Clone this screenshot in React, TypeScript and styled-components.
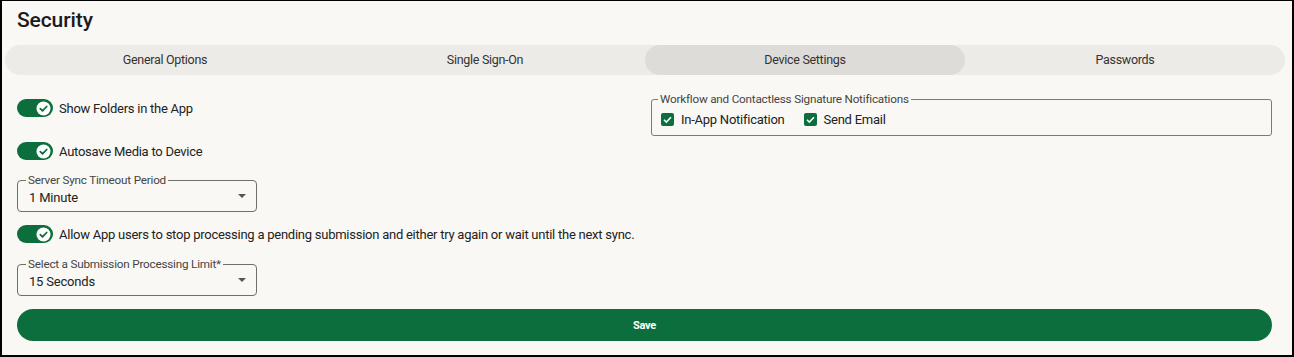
import React, { useState } from 'react';
import styled, { createGlobalStyle } from 'styled-components';

const GlobalStyle = createGlobalStyle`
  html, body {
    margin: 0;
    padding: 0;
    background: #ffffff;
  }
  * {
    box-sizing: border-box;
  }
`;

const PAGE_BG = '#f9f8f5';
const GREEN = '#0c6e3c';

// moldura da página
const Frame = styled.div`
  width: 1294px;
  height: 357px;
  border: 2px solid #000;
  border-top-width: 1px;
  background: ${PAGE_BG};
  font-family: Roboto, 'Liberation Sans', sans-serif;
  color: #222;
  overflow: hidden;
`;

const Title = styled.h1`
  margin: 0;
  padding: 7px 0 0 15px;
  height: 44px;
  font-size: 21px;
  font-weight: 500;
  color: #1b1b1b;
  letter-spacing: -0.1px;
`;

const TabBar = styled.div`
  display: grid;
  grid-template-columns: repeat(4, 1fr);
  height: 30px;
  margin-left: 3px;
  width: 1280px;
  background: #edebe7;
  border-radius: 15px;
`;

const Tab = styled.button<{ active?: boolean }>`
  border: none;
  border-radius: 15px;
  background: ${({ active }) => (active ? '#dedcd8' : 'transparent')};
  font-family: Roboto, 'Liberation Sans', sans-serif;
  font-size: 12.5px;
  letter-spacing: -0.3px;
  color: #333;
  cursor: pointer;
  padding: 0 0 2px 0;
`;

const Content = styled.div`
  display: grid;
  grid-template-columns: 621px 621px;
  column-gap: 13px;
  padding: 21px 0 0 15px;
`;

const Column = styled.div`
  display: flex;
  flex-direction: column;
`;

const ToggleRow = styled.label<{ mt: number }>`
  display: flex;
  align-items: center;
  gap: 6px;
  height: 24px;
  margin-top: ${({ mt }) => mt}px;
  font-size: 13px;
  letter-spacing: -0.25px;
  color: #222;
  cursor: pointer;
`;

const Track = styled.span`
  display: inline-flex;
  align-items: center;
  justify-content: flex-end;
  width: 36px;
  height: 18px;
  padding: 0 2px;
  border-radius: 9px;
  background: ${GREEN};
`;

const SelectBox = styled.div<{ mt: number }>`
  position: relative;
  width: 240px;
  height: 32px;
  margin-top: ${({ mt }) => mt}px;
  padding: 2px 10px 0 11px;
  border: 1px solid #6f6f6f;
  border-radius: 4px;
  display: flex;
  align-items: center;
  justify-content: space-between;
`;

// rótulo sobre a borda do campo
const Legend = styled.span<{ left: number }>`
  position: absolute;
  top: -7px;
  left: ${({ left }) => left}px;
  padding: 0 2px;
  background: ${PAGE_BG};
  font-size: 11.7px;
  letter-spacing: -0.2px;
  color: #444;
  line-height: 12px;
  white-space: nowrap;
`;

const SelectValue = styled.span`
  font-size: 13px;
  letter-spacing: -0.2px;
  color: #222;
`;

const Arrow = styled.span`
  width: 0;
  height: 0;
  margin-top: -2px;
  border-left: 4px solid transparent;
  border-right: 4px solid transparent;
  border-top: 4px solid #555;
`;

const NotifyBox = styled.div`
  position: relative;
  margin-top: 3px;
  height: 37px;
  padding: 3px 9px 0 9px;
  border: 1px solid #7a7a7a;
  border-radius: 3px;
  display: flex;
  align-items: center;
  gap: 19px;
`;

const CheckItem = styled.label`
  display: flex;
  align-items: center;
  gap: 7px;
  font-size: 13px;
  letter-spacing: -0.25px;
  color: #222;
  cursor: pointer;
`;

const CheckSquare = styled.span`
  display: inline-flex;
  align-items: center;
  justify-content: center;
  width: 13px;
  height: 13px;
  border-radius: 2px;
  background: ${GREEN};
`;

const SaveButton = styled.button`
  display: block;
  margin: 13px 0 0 15px;
  width: 1255px;
  height: 32px;
  border: none;
  border-radius: 16px;
  background: ${GREEN};
  color: #fff;
  font-family: Roboto, 'Liberation Sans', sans-serif;
  font-size: 11px;
  font-weight: 700;
  letter-spacing: -0.3px;
  cursor: pointer;
`;

const Knob = () => (
  <svg width="15" height="15" viewBox="0 0 15 15">
    <circle cx="7.5" cy="7.5" r="7" fill="#fff" />
    <path d="M4.3 7.7l2.2 2.2 4.2-4.4" fill="none" stroke={GREEN} strokeWidth="1.8" strokeLinecap="round" strokeLinejoin="round" />
  </svg>
);

const Tick = () => (
  <svg width="11" height="11" viewBox="0 0 11 11">
    <path d="M2 5.8l2.3 2.3L9 3.2" fill="none" stroke="#fff" strokeWidth="1.5" />
  </svg>
);

const Toggle: React.FC<{ label: string; mt: number }> = ({ label, mt }) => (
  <ToggleRow mt={mt}>
    <Track>
      <Knob />
    </Track>
    {label}
  </ToggleRow>
);

const Select: React.FC<{ legend: string; value: string; mt: number }> = ({ legend, value, mt }) => (
  <SelectBox mt={mt}>
    <Legend left={8}>{legend}</Legend>
    <SelectValue>{value}</SelectValue>
    <Arrow />
  </SelectBox>
);

const tabs = ['General Options', 'Single Sign-On', 'Device Settings', 'Passwords'];

export default function App() {
  const [active, setActive] = useState(2);
  return (
    <>
      <GlobalStyle />
      <Frame>
        <Title>Security</Title>
        <TabBar>
          {tabs.map((t, i) => (
            <Tab key={t} active={i === active} onClick={() => setActive(i)}>
              {t}
            </Tab>
          ))}
        </TabBar>
        <Content>
          <Column>
            <Toggle label="Show Folders in the App" mt={0} />
            <Toggle label="Autosave Media to Device" mt={19} />
            <Select legend="Server Sync Timeout Period" value="1 Minute" mt={17} />
            <Toggle label="Allow App users to stop processing a pending submission and either try again or wait until the next sync." mt={10} />
            <Select legend="Select a Submission Processing Limit*" value="15 Seconds" mt={18} />
          </Column>
          <Column>
            <NotifyBox>
              <Legend left={6}>Workflow and Contactless Signature Notifications</Legend>
              <CheckItem>
                <CheckSquare>
                  <Tick />
                </CheckSquare>
                In-App Notification
              </CheckItem>
              <CheckItem>
                <CheckSquare>
                  <Tick />
                </CheckSquare>
                Send Email
              </CheckItem>
            </NotifyBox>
          </Column>
        </Content>
        <SaveButton>Save</SaveButton>
      </Frame>
    </>
  );
}
